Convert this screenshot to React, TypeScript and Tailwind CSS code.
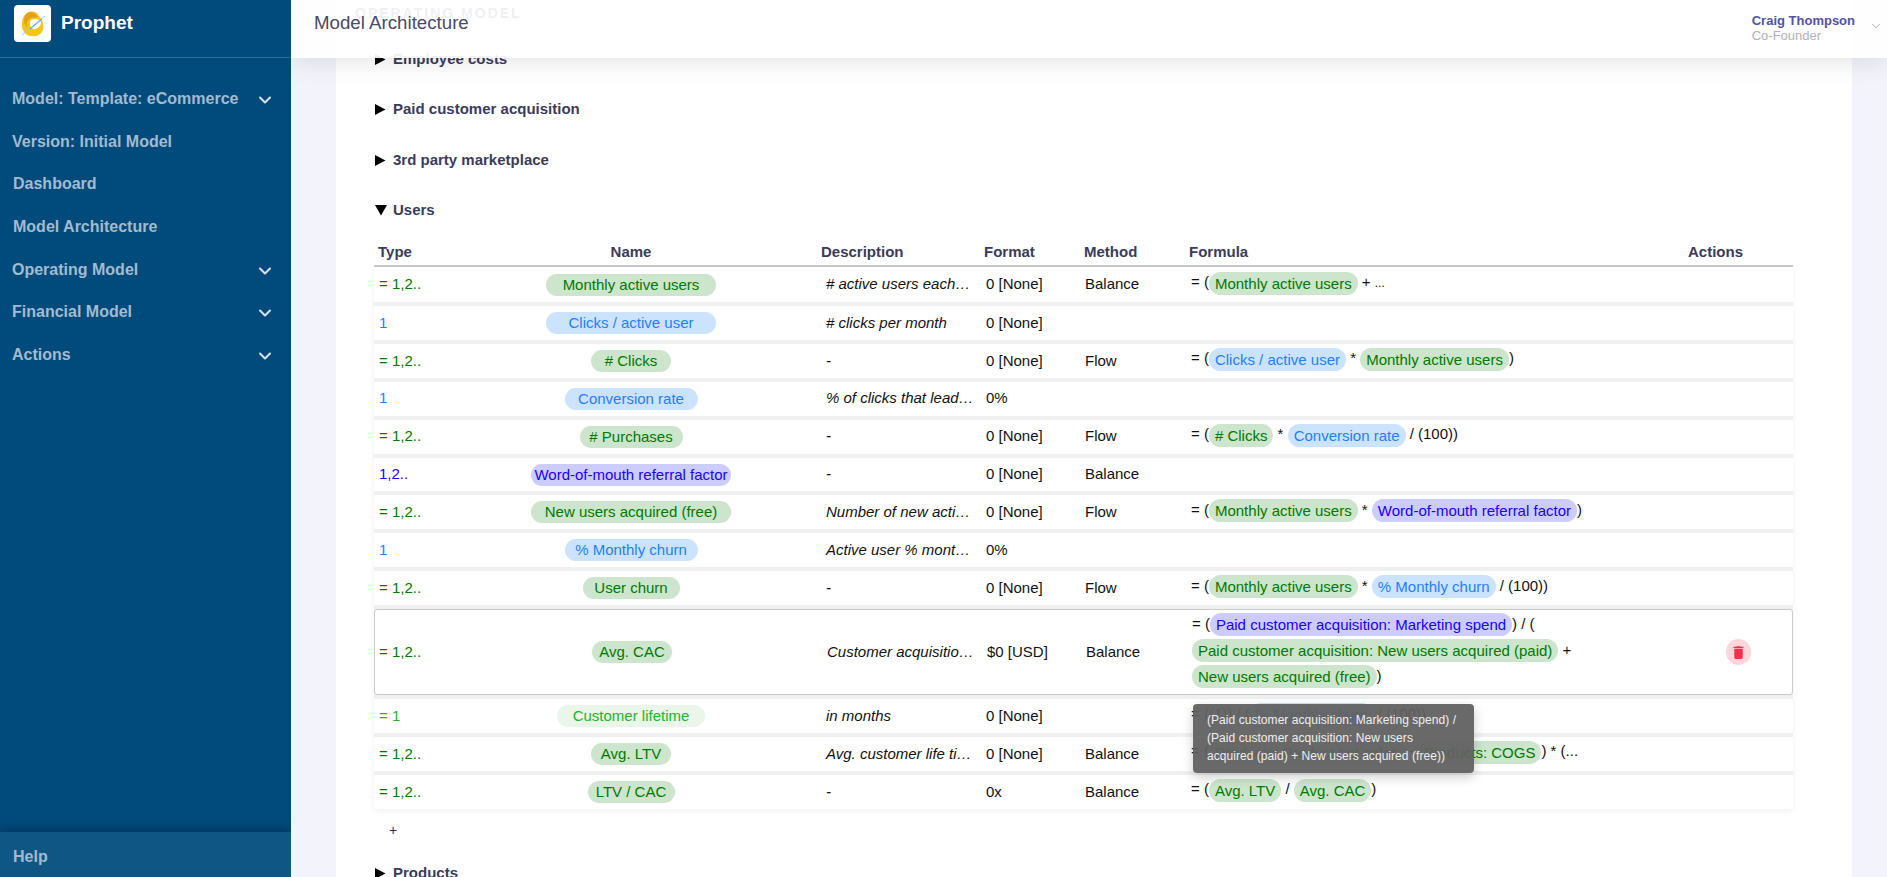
import { ChevronDown } from "lucide-react";
import { MdDelete } from "react-icons/md";
import type { ReactNode } from "react";

const GRID =
  "grid grid-cols-[111px_292px_207px_100px_105px_499px_105px] items-center";

type Kind = "green" | "blue" | "purple" | "lime";

const pillStyles: Record<Kind, string> = {
  green: "bg-[#cce5cc] text-[#007a00]",
  blue: "bg-[#cce3fd] text-[#1f7fff]",
  purple: "bg-[#ccccff] text-[#1a00ff]",
  lime: "bg-[#e9f6e9] text-[#25b425]",
};

const typeStyles: Record<Kind, string> = {
  green: "text-[#007a00]",
  blue: "text-[#1f7fff]",
  purple: "text-[#1a00ff]",
  lime: "text-[#25b425]",
};

const Pill = ({ kind, children }: { kind: Kind; children: ReactNode }) => (
  <span
    className={`inline-block rounded-full px-1.5 align-middle leading-[23px] ${pillStyles[kind]}`}
  >
    {children}
  </span>
);

type Row = {
  type: string;
  kind: Kind;
  name: string;
  width: string;
  desc: string;
  format: string;
  method: string;
  formula?: ReactNode;
};

const rows: Row[] = [
  {
    type: "= 1,2..",
    kind: "green",
    name: "Monthly active users",
    width: "w-[170px]",
    desc: "# active users each month",
    format: "0 [None]",
    method: "Balance",
    formula: (
      <>
        = (<Pill kind="green">Monthly active users</Pill> + <span className="text-xs">...</span>
      </>
    ),
  },
  {
    type: "1",
    kind: "blue",
    name: "Clicks / active user",
    width: "w-[170px]",
    desc: "# clicks per month",
    format: "0 [None]",
    method: "",
  },
  {
    type: "= 1,2..",
    kind: "green",
    name: "# Clicks",
    width: "w-[80px]",
    desc: "-",
    format: "0 [None]",
    method: "Flow",
    formula: (
      <>
        = (<Pill kind="blue">Clicks / active user</Pill> * <Pill kind="green">Monthly active users</Pill>)
      </>
    ),
  },
  {
    type: "1",
    kind: "blue",
    name: "Conversion rate",
    width: "w-[133px]",
    desc: "% of clicks that lead to a purchase",
    format: "0%",
    method: "",
  },
  {
    type: "= 1,2..",
    kind: "green",
    name: "# Purchases",
    width: "w-[103px]",
    desc: "-",
    format: "0 [None]",
    method: "Flow",
    formula: (
      <>
        = (<Pill kind="green"># Clicks</Pill> * <Pill kind="blue">Conversion rate</Pill> / (100))
      </>
    ),
  },
  {
    type: "1,2..",
    kind: "purple",
    name: "Word-of-mouth referral factor",
    width: "w-[200px]",
    desc: "-",
    format: "0 [None]",
    method: "Balance",
  },
  {
    type: "= 1,2..",
    kind: "green",
    name: "New users acquired (free)",
    width: "w-[200px]",
    desc: "Number of new active users",
    format: "0 [None]",
    method: "Flow",
    formula: (
      <>
        = (<Pill kind="green">Monthly active users</Pill> * <Pill kind="purple">Word-of-mouth referral factor</Pill>)
      </>
    ),
  },
  {
    type: "1",
    kind: "blue",
    name: "% Monthly churn",
    width: "w-[133px]",
    desc: "Active user % monthly churn",
    format: "0%",
    method: "",
  },
  {
    type: "= 1,2..",
    kind: "green",
    name: "User churn",
    width: "w-[97px]",
    desc: "-",
    format: "0 [None]",
    method: "Flow",
    formula: (
      <>
        = (<Pill kind="green">Monthly active users</Pill> * <Pill kind="blue">% Monthly churn</Pill> / (100))
      </>
    ),
  },
];

const rowsAfter: Row[] = [
  {
    type: "= 1",
    kind: "lime",
    name: "Customer lifetime",
    width: "w-[148px]",
    desc: "in months",
    format: "0 [None]",
    method: "",
    formula: (
      <>
        = ((1)) / (<Pill kind="blue">% Monthly churn</Pill> / (100))
      </>
    ),
  },
  {
    type: "= 1,2..",
    kind: "green",
    name: "Avg. LTV",
    width: "w-[80px]",
    desc: "Avg. customer life time value",
    format: "0 [None]",
    method: "Balance",
    formula: (
      <>
        = (<Pill kind="green">Products: Product net sales</Pill> - <Pill kind="green">Products: COGS</Pill>) * (...
      </>
    ),
  },
  {
    type: "= 1,2..",
    kind: "green",
    name: "LTV / CAC",
    width: "w-[87px]",
    desc: "-",
    format: "0x",
    method: "Balance",
    formula: (
      <>
        = (<Pill kind="green">Avg. LTV</Pill> / <Pill kind="green">Avg. CAC</Pill>)
      </>
    ),
  },
];

const Cells = ({ row }: { row: Row }) => (
  <>
    <span className={`pl-[5px] ${typeStyles[row.kind]}`}>{row.type}</span>
    <span className="flex justify-center">
      <span
        className={`${row.width} ${pillStyles[row.kind]} rounded-full text-center leading-[22px]`}
      >
        {row.name}
      </span>
    </span>
    <span className="truncate pl-[49px] pr-[10px] italic">{row.desc}</span>
    <span className="pl-[2px]">{row.format}</span>
    <span className="pl-[1px]">{row.method}</span>
  </>
);

const TableRow = ({ row, tall }: { row: Row; tall?: boolean }) => (
  <div
    className={`${GRID} ${tall ? "h-[35px]" : "h-[33.9px]"} bg-white text-[15px] text-[#111]`}
  >
    <Cells row={row} />
    <div className="pb-[5px] pl-[2px] leading-[26px]">{row.formula}</div>
    <div />
  </div>
);

const Section = ({ title, open, className }: { title: string; open?: boolean; className: string }) => (
  <div className={`flex h-5 items-center ${className}`}>
    <svg width="12" height="11" viewBox="0 0 12 11" className="shrink-0">
      <path d={open ? "M0 0H12L6 10.5Z" : "M0 0L10.5 5.5L0 11Z"} fill="#000" />
    </svg>
    <span className="ml-[6px] text-[15px] font-bold text-[#3b3b5c]">{title}</span>
  </div>
);

const SideItem = ({ label, caret, indent }: { label: string; caret?: boolean; indent?: boolean }) => (
  <div className={`flex h-[42.7px] items-center justify-between pr-[16px] ${indent ? "pl-[13px]" : "pl-[12px]"}`}>
    <span className="text-base font-bold text-[#a2bbcf]">{label}</span>
    {caret && <ChevronDown size={20} strokeWidth={2.5} className="mt-[2px] text-[#d5e0ea]" />}
  </div>
);

const Logo = () => (
  <div className="flex h-[37px] w-[37px] items-center justify-center rounded bg-white">
    <svg width="37" height="37" viewBox="0 0 37 37">
      <path
        d="M13 8C18 5 23 7 25 11C29 15 31 22 28 27C25 32 15 33 11 28C6 23 7 12 13 8Z"
        fill="#f6c51c"
      />
      <path d="M13 8C18 6 22 8 24 12L17 13C14 14 12 18 13 23C9 19 9 12 13 8Z" fill="#e5a013" />
      <path
        d="M17 15C20 13 25 14 27 17C27 20 25 23 21 24C18 24 16 22 16 19C16 17 16 16 17 15Z"
        fill="#fff"
      />
      <path d="M8 30L31 11" stroke="#8ccbf0" strokeWidth="1" />
      <path d="M16 24L28 14" stroke="#3f9fe0" strokeWidth="1" />
    </svg>
  </div>
);

const Sidebar = () => (
  <aside className="z-20 flex w-[291px] shrink-0 flex-col overflow-hidden bg-[#004a7c]">
    <div className="flex h-[58px] items-start gap-[10px] border-b border-[#2e6a95] pl-[14px] pt-[5px]">
      <Logo />
      <span className="pt-[6px] text-[19px] leading-[24px] font-bold text-white">Prophet</span>
    </div>
    <nav className="mt-[19.5px] flex-1">
      <SideItem label="Model: Template: eCommerce" caret />
      <SideItem label="Version: Initial Model" />
      <SideItem label="Dashboard" indent />
      <SideItem label="Model Architecture" indent />
      <SideItem label="Operating Model" caret />
      <SideItem label="Financial Model" caret />
      <SideItem label="Actions" caret />
    </nav>
    <div className="flex h-[45px] items-center bg-[#0f5685] pl-[13px] pt-[4px] text-base font-bold text-[#a2bbcf] shadow-[0_-3px_10px_rgba(0,0,0,0.25)]">
      Help
    </div>
  </aside>
);

const Header = () => (
  <header className="absolute inset-x-0 top-0 z-10 flex h-[58px] justify-between bg-white/92 pl-[23px] pr-[4px] shadow-[0_2px_28px_rgba(0,0,0,0.12)]">
    <span className="pt-[11px] text-[18.7px] leading-[24px] text-[#4a4a66]">Model Architecture</span>
    <div className="flex items-center gap-[14px]">
      <div className="mt-[-2px] text-[13px] leading-[15px]">
        <div className="font-bold text-[#5252a8]">Craig Thompson</div>
        <div className="text-[#b0b0ba]">Co-Founder</div>
      </div>
      <ChevronDown size={14} strokeWidth={1.25} className="mt-[-6px] text-[#8d8dc4]" />
    </div>
  </header>
);

const ExpandedRow = () => (
  <div className={`${GRID} relative h-[86px] rounded-[3px] border border-[#c8cccc] bg-white text-[15px] text-[#111]`}>
    <span className="pl-[4px] text-[#007a00]">= 1,2..</span>
    <span className="flex justify-center">
      <span className="w-[80px] rounded-full bg-[#cce5cc] text-center leading-[22px] text-[#007a00]">
        Avg. CAC
      </span>
    </span>
    <span className="truncate pl-[49px] pr-[10px] italic">Customer acquisition cost</span>
    <span className="pl-[2px]">$0 [USD]</span>
    <span className="pl-[1px]">Balance</span>
    <div className="max-w-[430px] pb-[5px] pl-[2px] leading-[26px]">
      = (<Pill kind="purple">Paid customer acquisition: Marketing spend</Pill>) / (
      <Pill kind="green">Paid customer acquisition: New users acquired (paid)</Pill> +{" "}
      <Pill kind="green">New users acquired (free)</Pill>)
    </div>
    <div className="flex justify-start pl-[37px]">
      <span className="flex h-[26px] w-[25px] items-center justify-center rounded-full bg-[#ffd6dc]">
        <MdDelete size={17} className="text-[#f5304a]" />
      </span>
    </div>
    <div className="absolute left-[818px] top-[94px] z-10 w-[281px] rounded bg-[#616161]/95 px-[14px] pb-[8px] pt-[7px] text-xs leading-[18px] font-medium tracking-[0.05px] text-white/90 shadow-[0_4px_12px_rgba(0,0,0,0.2)]">
      (Paid customer acquisition: Marketing spend) / (Paid customer acquisition: New users acquired
      (paid) + New users acquired (free))
    </div>
  </div>
);

export default function App() {
  return (
    <div className="flex h-screen overflow-hidden bg-[#f3f3fc] font-['Liberation_Sans',Arial,sans-serif]">
      <Sidebar />
      <main className="relative flex-1 overflow-hidden pl-[45px]">
        <Header />
        <div className="h-[877px] w-[1516px] overflow-hidden bg-white pl-[39px] pr-[59px]">
          <div className="-ml-[20px] pt-[3px] text-sm font-bold tracking-[2px] text-[#3b3b5c]">OPERATING MODEL</div>
          <Section title="Employee costs" className="mt-[26px]" />
          <Section title="Paid customer acquisition" className="mt-[30px]" />
          <Section title="3rd party marketplace" className="mt-[31px]" />
          <Section title="Users" open className="mt-[30px]" />

          <div className={`${GRID} -ml-[1px] mt-[17px] h-[30px] border-b-2 border-[#c8c8c8] pt-[2px] text-[15px] font-bold text-[#3b3b5c]`}>
            <span className="pl-[4px]">Type</span>
            <span className="text-center">Name</span>
            <span className="pl-[44px]">Description</span>
            <span>Format</span>
            <span>Method</span>
            <span>Formula</span>
            <span>Actions</span>
          </div>

          <div className="-ml-[1px] flex flex-col gap-1 bg-[#f0f0f0] shadow-[0_2px_6px_rgba(0,0,0,0.06)]">
            {rows.map((row, i) => (
              <TableRow key={row.name} row={row} tall={i === 0} />
            ))}
            <ExpandedRow />
            {rowsAfter.map((row) => (
              <TableRow key={row.name} row={row} />
            ))}
          </div>

          <div className="mt-[11px] pl-[14px] text-sm leading-5 text-[#2a2a6a]">+</div>
          <Section title="Products" className="mt-[23.5px]" />
        </div>
      </main>
    </div>
  );
}
